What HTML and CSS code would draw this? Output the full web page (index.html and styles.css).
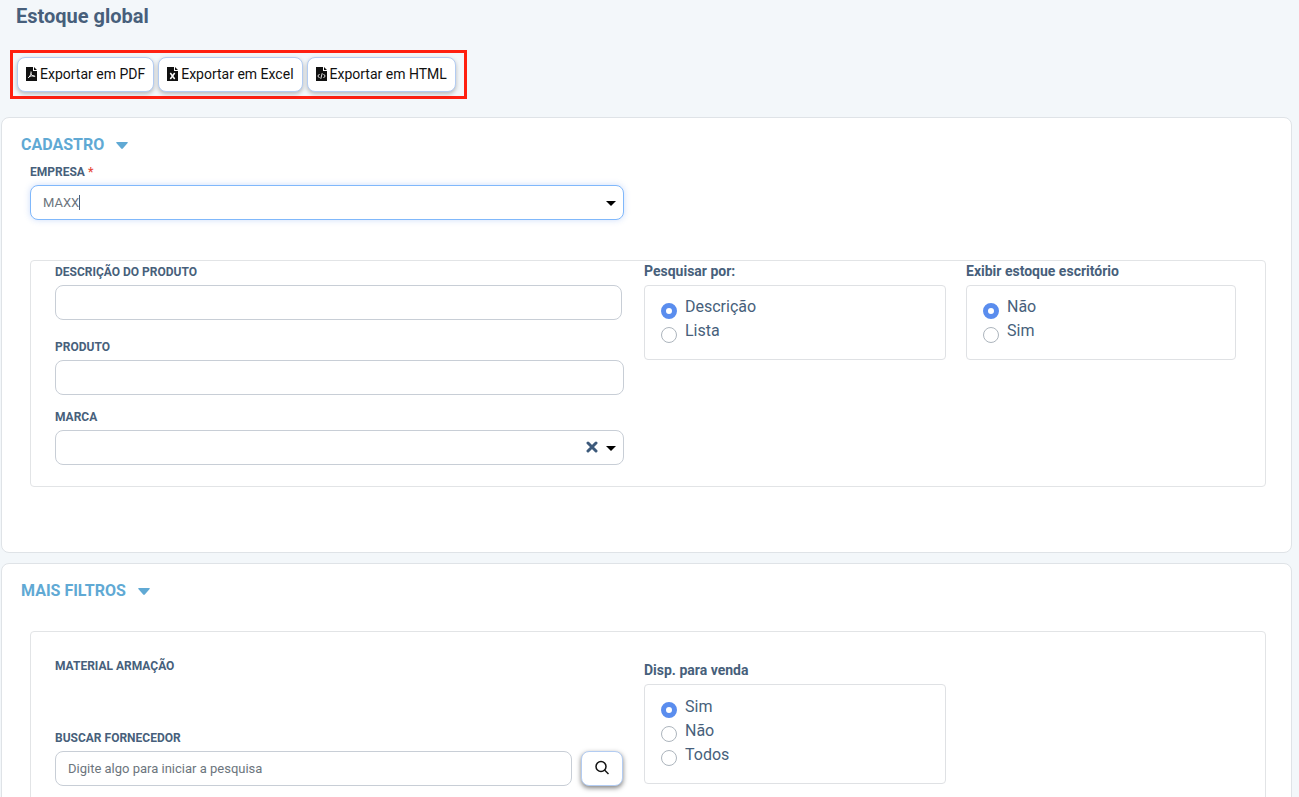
FILE: index.html
```html
<!DOCTYPE html>
<html lang="pt-BR">
<head>
<meta charset="utf-8">
<meta name="viewport" content="width=device-width, initial-scale=1">
<title>Estoque global</title>
<link rel="stylesheet" href="styles.css">
</head>
<body>
<main class="page">
  <h1 class="page-title">Estoque global</h1>

  <div class="toolbar">
    <button type="button" class="btn export-btn">
      <svg class="file-icon" viewBox="0 0 11 14" aria-hidden="true"><path fill="#111" d="M0 0h7v4h4v10H0zM8 0l3 3H8z"/><path fill="none" stroke="#fff" d="M5 4.500c.6 2-.6 4.500-2.800 6.500M4.800 6.500c.8 1.800 2 2.800 4.400 2.800M3 9.800c1.500-.9 3.500-1.100 5.500-.8"/></svg>
      <span>Exportar em PDF</span>
    </button>
    <button type="button" class="btn export-btn">
      <svg class="file-icon" viewBox="0 0 11 14" aria-hidden="true"><path fill="#111" d="M0 0h7v4h4v10H0zM8 0l3 3H8z"/><path fill="none" stroke="#fff" stroke-width="1.500" d="M3.300 6l4.400 6M7.700 6l-4.400 6"/></svg>
      <span>Exportar em Excel</span>
    </button>
    <button type="button" class="btn export-btn">
      <svg class="file-icon" viewBox="0 0 11 14" aria-hidden="true"><path fill="#111" d="M0 0h7v4h4v10H0zM8 0l3 3H8z"/><path fill="none" stroke="#fff" stroke-width=".9" d="M3.500 7L1.800 9l1.700 2M7.500 7l1.700 2-1.700 2M6.200 6.200l-1.400 5.600"/></svg>
      <span>Exportar em HTML</span>
    </button>
  </div>

  <section class="card">
    <h2 class="card-title">CADASTRO <svg class="chevron" viewBox="0 0 12 7" aria-hidden="true"><path fill="currentColor" d="M.8 0h10.400q1 .3.400 1.100L6.800 6.500q-.8.800-1.600 0L.4 1.100Q-.2.300.8 0z"/></svg></h2>
    <div class="company">
      <label class="label" for="empresa">EMPRESA <span class="required">*</span></label>
      <div class="combo">
        <input class="control focused" id="empresa" type="text" role="combobox" aria-expanded="false" value="MAXX">
        <span class="text-cursor"></span>
        <svg class="arrow" viewBox="0 0 10 5" aria-hidden="true"><path d="M0 0h10L5 5z"/></svg>
      </div>
    </div>
    <div class="panel panel-product">
      <div class="fields">
        <div class="field field-description">
          <label class="label" for="descricao">DESCRIÇÃO DO PRODUTO</label>
          <input class="control" id="descricao" type="text">
        </div>
        <div class="field field-product">
          <label class="label" for="produto">PRODUTO</label>
          <input class="control" id="produto" type="text">
        </div>
        <div class="field">
          <label class="label" for="marca">MARCA</label>
          <div class="combo">
            <select class="control" id="marca"><option></option></select>
            <button type="button" class="clear" aria-label="Limpar marca"><svg viewBox="0 0 12 12" aria-hidden="true"><path d="M2 2l8 8M10 2l-8 8"/></svg></button>
            <svg class="arrow" viewBox="0 0 10 5" aria-hidden="true"><path d="M0 0h10L5 5z"/></svg>
          </div>
        </div>
      </div>
      <fieldset class="group">
        <legend class="group-title">Pesquisar por:</legend>
        <div class="options">
          <label class="option"><input type="radio" name="pesquisar" checked>Descrição</label>
          <label class="option"><input type="radio" name="pesquisar">Lista</label>
        </div>
      </fieldset>
      <fieldset class="group">
        <legend class="group-title">Exibir estoque escritório</legend>
        <div class="options">
          <label class="option"><input type="radio" name="escritorio" checked>Não</label>
          <label class="option"><input type="radio" name="escritorio">Sim</label>
        </div>
      </fieldset>
    </div>
  </section>

  <section class="card">
    <h2 class="card-title">MAIS FILTROS <svg class="chevron" viewBox="0 0 12 7" aria-hidden="true"><path fill="currentColor" d="M.8 0h10.400q1 .3.400 1.100L6.800 6.500q-.8.800-1.600 0L.4 1.100Q-.2.300.8 0z"/></svg></h2>
    <div class="panel panel-filters">
      <div class="fields">
        <div class="field field-material"><span class="label">MATERIAL ARMAÇÃO</span></div>
        <div class="field">
          <label class="label" for="fornecedor">BUSCAR FORNECEDOR</label>
          <div class="search">
            <input class="control" id="fornecedor" type="text" placeholder="Digite algo para iniciar a pesquisa">
            <button type="button" class="btn search-btn" aria-label="Pesquisar"><svg viewBox="0 0 16 16" aria-hidden="true"><circle cx="7" cy="6.500" r="5"/><path d="M10.500 10l4 4"/></svg></button>
          </div>
        </div>
      </div>
      <fieldset class="group group-sale">
        <legend class="group-title">Disp. para venda</legend>
        <div class="options">
          <label class="option"><input type="radio" name="venda" checked>Sim</label>
          <label class="option"><input type="radio" name="venda">Não</label>
          <label class="option"><input type="radio" name="venda">Todos</label>
        </div>
      </fieldset>
    </div>
  </section>
</main>
</body>
</html>
```
FILE: styles.css
```css
*, *::before, *::after { box-sizing: border-box; }

body {
  margin: 0;
  background: #f3f7fa;
  color: #475f7b;
  font-family: Roboto, "Liberation Sans", sans-serif;
  font-size: 16px;
}

input, select, button { font: inherit; }

.page {
  height: 100vh;
  overflow: hidden;
  padding: 4px 7px 0 1px;
}

.page-title {
  margin: 0 0 22px 15px;
  font-size: 20px;
  line-height: 24px;
  font-weight: 700;
}

.toolbar {
  display: flex;
  gap: 4px;
  width: fit-content;
  margin: 0 0 18px 9px;
  padding: 4px 8px 4px 4px;
  border: 3px solid #ff2010;
}

.btn {
  height: 35px;
  border: 1px solid #b3ccf2;
  border-radius: 8px;
  background: #fff;
  color: #111;
}

.export-btn {
  display: flex;
  align-items: center;
  gap: 3px;
  padding: 0 8px 2px;
  font-size: 14px;
  box-shadow: 0 2px 4px rgba(0, 0, 0, .25);
}

.file-icon { width: 11px; height: 14px; }

.card {
  margin-bottom: 10px;
  padding: 15px 25px 65px 28px;
  border: 1px solid #dfe3e7;
  border-radius: 8px;
  background: #fff;
}

.card-title {
  display: flex;
  align-items: center;
  gap: 12px;
  margin: 0 0 0 -9px;
  color: #60a9d4;
  font-size: 16px;
  line-height: 24px;
  font-weight: 700;
}

.chevron { width: 12px; height: 7px; }

.company { width: calc(48% + 1px); margin-top: 5px; }

.label {
  display: block;
  margin-bottom: 3px;
  font-size: 12px;
  line-height: 20px;
  font-weight: 700;
}

.required { color: #e74c3c; }

.control {
  display: block;
  width: 100%;
  height: 35px;
  padding: 0 12px;
  border: 1px solid #c8ced6;
  border-radius: 8px;
  outline: 0;
  background: #fff;
  color: #6c757d;
  font-size: 13px;
  appearance: none;
}

.control::placeholder { color: #6c757d; opacity: 1; }

.focused {
  border-color: #80b8fb;
  box-shadow: 0 0 6px rgba(90, 141, 238, .3);
}

.combo { position: relative; }

.text-cursor {
  position: absolute;
  top: 10px;
  left: 49px;
  width: 1px;
  height: 15px;
  background: #475f7b;
}

.arrow {
  position: absolute;
  top: 16px;
  right: 8px;
  width: 10px;
  height: 5px;
}

.clear {
  position: absolute;
  top: 11px;
  right: 26px;
  width: 12px;
  height: 12px;
  padding: 0;
  border: 0;
  background: none;
}

.clear svg { display: block; }
.clear path { stroke: #3d5a7b; stroke-width: 3; stroke-linecap: round; }

.panel {
  display: grid;
  grid-template-columns: 569fr 302fr 270fr;
  align-items: start;
  column-gap: 20px;
  border: 1px solid #e2e4e6;
  border-radius: 4px;
}

.panel-product { margin-top: 40px; padding: 1px 29px 21px 24px; }
.panel-filters { margin-top: 28px; padding: 24px 29px 21px 24px; }

.field-description { margin-bottom: 17px; padding-right: 2px; }
.field-product { margin-bottom: 12px; }
.field-material { margin-bottom: 52px; }
.field-material .label { margin-bottom: 0; }

.group { min-width: 0; margin: 0; padding: 0; border: 0; }
.group-sale { margin-top: 5px; }

.group-title {
  margin-bottom: 5px;
  padding: 0;
  font-size: 14px;
  line-height: 18px;
  font-weight: 700;
}

.options {
  padding: 8px 16px 17px;
  border: 1px solid #dfe1e4;
  border-radius: 4px;
}

.group-sale .options { padding-bottom: 18px; }

.option {
  display: flex;
  align-items: flex-start;
  gap: 8px;
  height: 24px;
  line-height: 26px;
}

.group-sale .option { line-height: 28px; }

.option input {
  flex: none;
  width: 16px;
  height: 16px;
  margin: 9px 0 0;
  border: 1px solid #adb5bd;
  border-radius: 50%;
  background: #fff;
  appearance: none;
}

.option input:checked { border: 5px solid #5a8dee; }

.search { display: flex; gap: 9px; padding-right: 1px; }

.search-btn {
  display: flex;
  flex: none;
  align-items: center;
  justify-content: center;
  width: 42px;
  padding: 0 0 2px;
  box-shadow: 0 2px 5px rgba(0, 0, 0, .5);
}

.search-btn svg {
  width: 16px;
  height: 16px;
  fill: none;
  stroke: #111;
  stroke-width: 1.5;
}
```
